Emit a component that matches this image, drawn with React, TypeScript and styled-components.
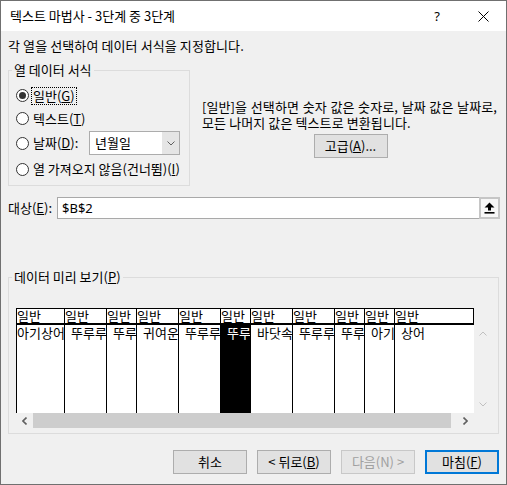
import styled, { createGlobalStyle } from "styled-components";

const GlobalStyle = createGlobalStyle`
  html, body {
    margin: 0;
    padding: 0;
    background: #f0f0f0;
  }
  body {
    font-family: "Noto Sans CJK KR", "Noto Sans", sans-serif;
    font-size: 13px;
    color: #000;
  }
`;

const Window = styled.div`
  width: 507px;
  height: 485px;
  box-sizing: border-box;
  border: 1px solid #707070;
  background: #f0f0f0;
  display: flex;
  flex-direction: column;
`;

const TitleBar = styled.div`
  height: 30px;
  background: #fff;
  display: flex;
  align-items: center;
`;

const Title = styled.div`
  flex: 1;
  padding-left: 9px;
  line-height: 16px;
`;

const TitleButton = styled.div`
  width: 46px;
  height: 30px;
  display: flex;
  align-items: center;
  justify-content: center;
  font-family: "Noto Sans", sans-serif;
  font-size: 13px;
`;

const Content = styled.div`
  flex: 1;
  display: flex;
  flex-direction: column;
  padding: 7px 7px 10px 7px;
`;

const Line = styled.div<{ $width?: number }>`
  line-height: 16px;
  white-space: nowrap;
  letter-spacing: 0.1px;
  width: ${(p) => (p.$width ? `${p.$width}px` : "auto")};
  text-align: ${(p) => (p.$width ? "justify" : "left")};
  text-align-last: ${(p) => (p.$width ? "justify" : "auto")};
  white-space: ${(p) => (p.$width ? "normal" : "nowrap")};
`;

const Key = styled.span`
  text-decoration: underline;
  text-underline-offset: 1px;
`;

const Group = styled.fieldset<{ $width?: number }>`
  margin: 0;
  padding: 0;
  min-width: 0;
  box-sizing: border-box;
  border: 1px solid #dcdcdc;
  width: ${(p) => (p.$width ? `${p.$width}px` : "auto")};
`;

const Legend = styled.legend`
  margin-left: 3px;
  padding: 0 2px;
  line-height: 16px;
`;

const FormatRow = styled.div`
  display: flex;
  margin-top: 8px;
`;

const RadioList = styled.div`
  display: flex;
  flex-direction: column;
  padding: 6px 9px 3px 7px;
`;

const RadioRow = styled.div<{ $h: number }>`
  height: ${(p) => p.$h}px;
  display: flex;
  align-items: center;
`;

const RadioCircle = styled.span<{ $checked?: boolean }>`
  width: 13px;
  height: 13px;
  flex: none;
  box-sizing: border-box;
  border: 1px solid #333;
  border-radius: 50%;
  background: #fff;
  display: flex;
  align-items: center;
  justify-content: center;

  &::after {
    content: "";
    width: 7px;
    height: 7px;
    border-radius: 50%;
    background: ${(p) => (p.$checked ? "#333" : "transparent")};
  }
`;

const RadioLabel = styled.span<{ $focused?: boolean }>`
  margin-left: 2px;
  padding: 0 1px;
  line-height: 16px;
  white-space: nowrap;
  border: 1px dotted ${(p) => (p.$focused ? "#000" : "transparent")};
`;

const Combo = styled.div`
  margin-left: auto;
  width: 91px;
  height: 24px;
  box-sizing: border-box;
  border: 1px solid #acacac;
  background: #fff;
  display: flex;
`;

const ComboText = styled.div`
  flex: 1;
  padding-left: 5px;
  line-height: 22px;
`;

const ComboArrow = styled.div`
  width: 17px;
  background: #e5e5e5;
  display: flex;
  align-items: center;
  justify-content: center;
`;

const Description = styled.div`
  flex: 1;
  margin-left: 12px;
  padding-top: 37px;
  display: flex;
  flex-direction: column;
`;

const Button = styled.button<{ $primary?: boolean }>`
  width: 74px;
  height: 24px;
  box-sizing: border-box;
  padding: 0;
  border: 1px solid ${(p) => (p.$primary ? "#0078d7" : "#adadad")};
  box-shadow: ${(p) => (p.$primary ? "inset 0 0 0 1px #0078d7" : "none")};
  background: #e1e1e1;
  font-family: inherit;
  font-size: 13px;
  color: #000;
  line-height: 16px;

  &:disabled {
    color: #a0a0a0;
    border-color: #c8c8c8;
    background: #e6e6e6;
  }
`;

const AdvancedButton = styled(Button)`
  align-self: center;
  margin-top: 3px;
`;

const TargetRow = styled.div`
  display: flex;
  align-items: center;
  margin-top: 11px;
  margin-bottom: 50px;
`;

const TargetLabel = styled.div`
  width: 49px;
  line-height: 16px;
  white-space: nowrap;
`;

const TargetInput = styled.div`
  flex: 1;
  margin-right: -1px;
  height: 22px;
  box-sizing: border-box;
  border: 1px solid #a9a9a9;
  background: #fff;
  display: flex;
  align-items: center;
`;

const TargetText = styled.div`
  flex: 1;
  padding-left: 4px;
  line-height: 16px;
  font-family: "Noto Sans", sans-serif;
`;

const CollapseButton = styled.div`
  width: 21px;
  height: 22px;
  margin: -1px -1px -1px 0;
  box-sizing: border-box;
  border: 2px solid #c6c6c6;
  background: #f7f7f7;
  display: flex;
  align-items: center;
  justify-content: center;
`;

const PreviewInner = styled.div`
  padding: 23px 0 5px 7px;
`;

const PreviewGrid = styled.div`
  display: grid;
  grid-template-columns: 458px 17px;
  grid-template-rows: 17px 88px 15px;
  font-size: 13px;
`;

const TableRow = styled.div<{ $cols: string }>`
  display: grid;
  grid-template-columns: ${(p) => p.$cols};
`;

const HeaderCell = styled.div<{ $last?: boolean }>`
  box-sizing: border-box;
  height: 17px;
  background: #fff;
  border-top: 1px solid #000;
  border-bottom: 2px solid #000;
  border-left: 1px solid #000;
  border-right: ${(p) => (p.$last ? "1px solid #000" : "none")};
  line-height: 14px;
  white-space: nowrap;
`;

const BodyCell = styled.div<{ $selected?: boolean; $indent: number }>`
  box-sizing: border-box;
  height: 88px;
  border-left: 1px solid #000;
  padding-left: ${(p) => p.$indent}px;
  background: ${(p) => (p.$selected ? "#000" : "#fff")};
  color: ${(p) => (p.$selected ? "#fff" : "#000")};
  line-height: 16px;
  white-space: nowrap;
  overflow-x: clip;
`;

const VScroll = styled.div`
  display: flex;
  flex-direction: column;
  justify-content: space-between;
  align-items: center;
  padding: 6px 0;
  background: #f0f0f0;
`;

const HScroll = styled.div`
  display: flex;
  background: #f0f0f0;
`;

const ScrollArrow = styled.div`
  width: 17px;
  flex: none;
  display: flex;
  align-items: center;
  justify-content: center;
`;

const ScrollTrack = styled.div`
  flex: 1;
  display: flex;
`;

const ScrollThumb = styled.div<{ $w: number }>`
  width: ${(p) => p.$w}px;
  background: #cdcdcd;
`;

const ButtonBar = styled.div`
  display: flex;
  justify-content: flex-end;
  gap: 10px;
  margin-top: 16px;
`;

const columns = [
  { w: 48, body: "아기상어" },
  { w: 42, body: " 뚜루루" },
  { w: 30, body: " 뚜루" },
  { w: 42, body: " 귀여운" },
  { w: 42, body: " 뚜루루" },
  { w: 30, body: " 뚜루", selected: true },
  { w: 42, body: " 바닷속" },
  { w: 42, body: " 뚜루루" },
  { w: 30, body: " 뚜루" },
  { w: 30, body: " 아기" },
  { w: 80, body: " 상어" },
];

const Chevron = ({ dir, color }: { dir: "up" | "down" | "left" | "right"; color: string }) => {
  const pts = {
    up: "0.5,4.5 4,1 7.5,4.5",
    down: "0.5,0.5 4,4 7.5,0.5",
    left: "4.5,0.5 1,4 4.5,7.5",
    right: "0.5,0.5 4,4 0.5,7.5",
  }[dir];
  const vertical = dir === "up" || dir === "down";
  return (
    <svg width={vertical ? 8 : 5} height={vertical ? 5 : 8} viewBox={vertical ? "0 0 8 5" : "0 0 5 8"}>
      <polyline points={pts} fill="none" stroke={color} strokeWidth={vertical ? 1 : 1.6} />
    </svg>
  );
};

export default function App() {
  const cols = columns.map((c) => `${c.w}px`).join(" ");
  return (
    <>
      <GlobalStyle />
      <Window>
        <TitleBar>
          <Title>텍스트 마법사 - 3단계 중 3단계</Title>
          <TitleButton>?</TitleButton>
          <TitleButton>
            <svg width="11" height="11" viewBox="0 0 11 11">
              <path d="M0.5 0.5 L10.5 10.5 M10.5 0.5 L0.5 10.5" stroke="#000" strokeWidth="1" />
            </svg>
          </TitleButton>
        </TitleBar>
        <Content>
          <Line>각 열을 선택하여 데이터 서식을 지정합니다.</Line>
          <FormatRow>
            <Group $width={182}>
              <Legend>열 데이터 서식</Legend>
              <RadioList>
                <RadioRow $h={23}>
                  <RadioCircle $checked />
                  <RadioLabel $focused>
                    일반(<Key>G</Key>)
                  </RadioLabel>
                </RadioRow>
                <RadioRow $h={23}>
                  <RadioCircle />
                  <RadioLabel>
                    텍스트(<Key>T</Key>)
                  </RadioLabel>
                </RadioRow>
                <RadioRow $h={26}>
                  <RadioCircle />
                  <RadioLabel>
                    날짜(<Key>D</Key>):
                  </RadioLabel>
                  <Combo>
                    <ComboText>년월일</ComboText>
                    <ComboArrow>
                      <Chevron dir="down" color="#606060" />
                    </ComboArrow>
                  </Combo>
                </RadioRow>
                <RadioRow $h={26}>
                  <RadioCircle />
                  <RadioLabel>
                    열 가져오지 않음(건너뜀)(<Key>I</Key>)
                  </RadioLabel>
                </RadioRow>
              </RadioList>
            </Group>
            <Description>
              <Line $width={295}>[일반]을 선택하면 숫자 값은 숫자로, 날짜 값은 날짜로,</Line>
              <Line>모든 나머지 값은 텍스트로 변환됩니다.</Line>
              <AdvancedButton>
                고급(<Key>A</Key>)...
              </AdvancedButton>
            </Description>
          </FormatRow>
          <TargetRow>
            <TargetLabel>
              대상(<Key>E</Key>):
            </TargetLabel>
            <TargetInput>
              <TargetText>$B$2</TargetText>
              <CollapseButton>
                <svg width="11" height="12" viewBox="0 0 11 12">
                  <path d="M5.5 0.5 L10.5 5.5 L7 5.5 L7 8.5 L4 8.5 L4 5.5 L0.5 5.5 Z" fill="#000" />
                  <rect x="0.5" y="10" width="10" height="1.6" fill="#000" />
                </svg>
              </CollapseButton>
            </TargetInput>
          </TargetRow>
          <Group>
            <Legend>
              데이터 미리 보기(<Key>P</Key>)
            </Legend>
            <PreviewInner>
              <PreviewGrid>
                <TableRow $cols={cols}>
                  {columns.map((c, i) => (
                    <HeaderCell key={i} $last={i === columns.length - 1}>
                      일반
                    </HeaderCell>
                  ))}
                </TableRow>
                <div />
                <TableRow $cols={cols}>
                  {columns.map((c, i) => (
                    <BodyCell key={i} $selected={c.selected} $indent={c.body.startsWith(" ") ? 6 : 0}>
                      {c.body.trim()}
                    </BodyCell>
                  ))}
                </TableRow>
                <VScroll>
                  <Chevron dir="up" color="#c0c0c0" />
                  <Chevron dir="down" color="#c0c0c0" />
                </VScroll>
                <HScroll>
                  <ScrollArrow>
                    <Chevron dir="left" color="#606060" />
                  </ScrollArrow>
                  <ScrollTrack>
                    <ScrollThumb $w={418} />
                  </ScrollTrack>
                  <ScrollArrow>
                    <Chevron dir="right" color="#606060" />
                  </ScrollArrow>
                </HScroll>
                <div />
              </PreviewGrid>
            </PreviewInner>
          </Group>
          <ButtonBar>
            <Button>취소</Button>
            <Button>
              &lt; 뒤로(<Key>B</Key>)
            </Button>
            <Button disabled>다음(N) &gt;</Button>
            <Button $primary>
              마침(<Key>F</Key>)
            </Button>
          </ButtonBar>
        </Content>
      </Window>
    </>
  );
}
